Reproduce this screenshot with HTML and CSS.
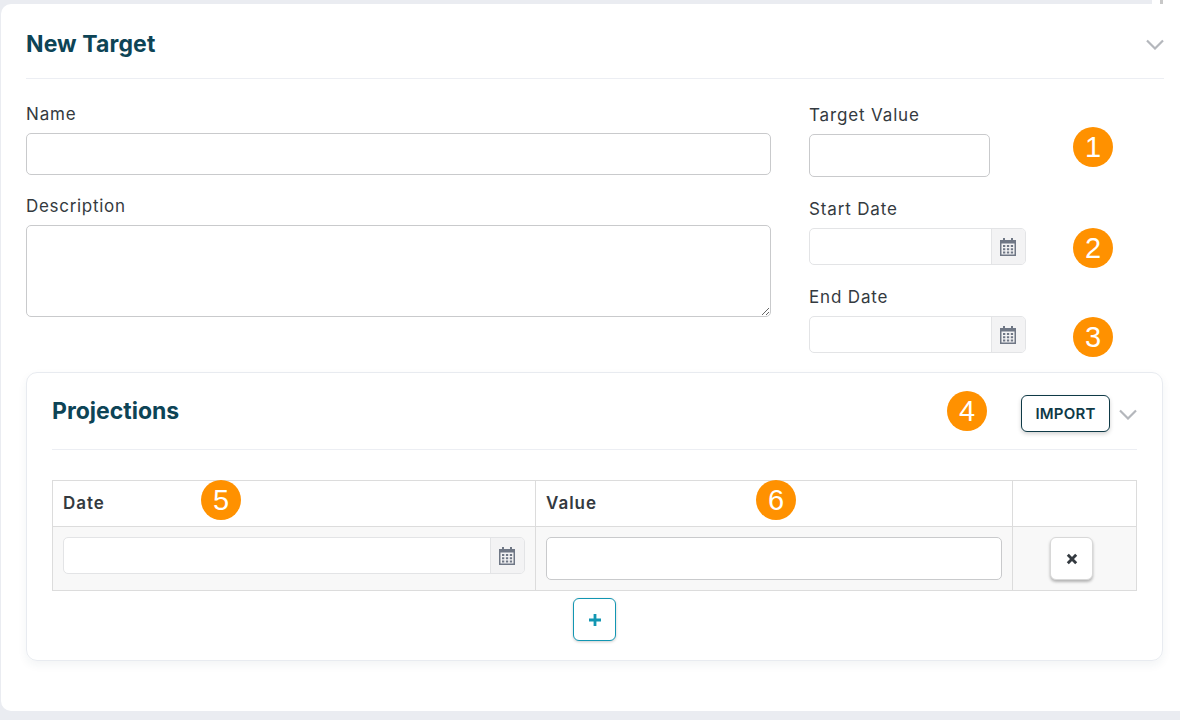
FILE: index.html
```html
<!DOCTYPE html>
<html lang="en">
<head>
<meta charset="utf-8">
<title>New Target</title>
<link rel="stylesheet" href="styles.css">
</head>
<body>
<span class="scroll-tick"></span>
<main class="card">
  <header class="card-head">
    <h1 class="title">New Target</h1>
    <svg class="chev" viewBox="0 0 18 11"><path d="M1 1.5l8 8 8-8"/></svg>
  </header>
  <section class="form">
    <div class="col-left">
      <label class="label">Name</label>
      <input class="input input-name" type="text">
      <label class="label label-desc">Description</label>
      <textarea class="input textarea"></textarea>
    </div>
    <div class="col-right">
      <div class="field-row row-value">
        <div class="field">
          <label class="label">Target Value</label>
          <input class="input input-value" type="text">
        </div>
        <span class="badge badge-a">1</span>
      </div>
      <div class="field-row row-start">
        <div class="field">
          <label class="label">Start Date</label>
          <div class="date date-short">
            <span class="date-input"></span>
            <span class="date-btn"><svg class="cal" viewBox="0 0 16 18"><use href="#cal"/></svg></span>
          </div>
        </div>
        <span class="badge badge-b">2</span>
      </div>
      <div class="field-row row-end">
        <div class="field">
          <label class="label">End Date</label>
          <div class="date date-short">
            <span class="date-input"></span>
            <span class="date-btn"><svg class="cal" viewBox="0 0 16 18"><use href="#cal"/></svg></span>
          </div>
        </div>
        <span class="badge badge-c">3</span>
      </div>
    </div>
  </section>
  <section class="panel">
    <header class="panel-head">
      <h2 class="panel-title">Projections</h2>
      <span class="badge badge-4">4</span>
      <button class="btn-import" type="button">IMPORT</button>
      <svg class="chev chev-panel" viewBox="0 0 18 11"><path d="M1 1.5l8 8 8-8"/></svg>
    </header>
    <table class="grid">
      <thead>
        <tr>
          <th class="c-date"><span>Date</span><span class="badge badge-5">5</span></th>
          <th class="c-value"><span>Value</span><span class="badge badge-6">6</span></th>
          <th class="c-act"></th>
        </tr>
      </thead>
      <tbody>
        <tr>
          <td>
            <div class="date">
              <span class="date-input"></span>
              <span class="date-btn"><svg class="cal" viewBox="0 0 16 18"><use href="#cal"/></svg></span>
            </div>
          </td>
          <td><input class="input input-cell" type="text"></td>
          <td class="act-cell">
            <button class="btn-x" type="button">
              <svg viewBox="0 0 10 10"><path d="M1.500 1.500l7 7M8.500 1.500l-7 7"/></svg>
            </button>
          </td>
        </tr>
      </tbody>
    </table>
    <div class="add-row">
      <button class="btn-add" type="button">
        <svg viewBox="0 0 14 14"><path d="M7 1v12M1 7h12"/></svg>
      </button>
    </div>
  </section>
</main>
<svg class="defs" width="0" height="0">
  <defs>
    <g id="cal">
      <path fill="#6f7785" fill-rule="evenodd" d="M3 0h2v2h6V0h2v2h3v16H0V2h3zM1.500 5.500v11h13v-11z"/>
      <path fill="#6f7785" d="M3 7h2.300v2H3zM6.900 7h2.300v2H6.900zM10.800 7h2.300v2h-2.300zM3 10.200h2.300v2H3zM6.900 10.200h2.300v2H6.900zM10.800 10.200h2.300v2h-2.300zM3 13.400h2.300v2H3zM6.900 13.400h2.300v2H6.900zM10.800 13.400h2.300v2h-2.300z"/>
    </g>
  </defs>
</svg>
</body>
</html>
```
FILE: styles.css
```css
* { box-sizing: border-box; }
html, body { height: 100%; }
body {
  margin: 0;
  height: 720px;
  overflow: hidden;
  background: #eaecf1;
  font-family: "Inter", "Liberation Sans", sans-serif;
  color: #343a40;
  padding: 4px 0 9px 1px;
  position: relative;
}
.defs { position: absolute; }
.scroll-tick {
  position: absolute;
  top: 0;
  left: 1152px;
  width: 28px;
  height: 4px;
  background: linear-gradient(to right, #fff 8px, #c8c8c8 8px, #c8c8c8 11px, #fff 11px);
}
.card {
  height: 707px;
  background: #fff;
  border-radius: 10px 0 0 10px;
  padding: 0 16px 0 25px;
}
.card-head {
  height: 75px;
  padding-top: 6px;
  border-bottom: 1px solid #eceef3;
  display: flex;
  align-items: center;
  justify-content: space-between;
}
.title {
  margin: 0;
  font-size: 23px;
  line-height: 28px;
  font-weight: 700;
  color: #0d4456;
  letter-spacing: 0.1px;
}
.chev { width: 18px; height: 11px; fill: none; stroke: #b4b7bc; stroke-width: 2.2; }
.form { display: flex; height: 293px; }
.col-left { width: 745px; padding-top: 24px; display: flex; flex-direction: column; }
.col-right { margin-left: 38px; flex: 1; }
.label { display: block; font-size: 17px; line-height: 22px; color: #343a40; letter-spacing: 0.85px; }
.label-desc { letter-spacing: 0.7px; }
.input {
  display: block;
  background: #fff;
  border: 1px solid #c9cacc;
  border-radius: 5px;
  outline: none;
}
.input-name { width: 745px; height: 42px; margin-top: 8px; }
.label-desc { margin-top: 20px; }
.textarea { width: 745px; height: 92px; margin-top: 8px; }
.field-row { display: flex; align-items: flex-start; }
.row-value { padding-top: 25px; }
.row-start { padding-top: 21px; }
.row-end { padding-top: 21px; }
.input-value { width: 181px; height: 43px; margin-top: 8px; }
.field { width: 264px; }
.date {
  display: flex;
  height: 37px;
  border: 1px solid #e3e4e6;
  border-radius: 5px;
  overflow: hidden;
  background: #fff;
}
.date-short { width: 217px; margin-top: 8px; }
.date-input { flex: 1; }
.date-btn {
  width: 34px;
  padding-right: 2px;
  background: #f3f3f4;
  border-left: 1px solid #e3e4e6;
  display: flex;
  align-items: center;
  justify-content: center;
}
.cal { width: 16px; height: 18px; }
.badge {
  width: 40px;
  height: 40px;
  border-radius: 50%;
  background: #ff9100;
  color: #fff;
  font-family: "Liberation Sans", sans-serif;
  font-size: 29px;
  font-weight: 400;
  line-height: 40px;
  text-align: center;
  letter-spacing: 0;
  flex: none;
}
.badge-a { margin-top: 23px; margin-bottom: -10px; }
.badge-b { margin-top: 30px; margin-bottom: -10px; }
.badge-c { margin-top: 31px; margin-bottom: -10px; }
.panel {
  width: 1137px;
  height: 289px;
  border: 1px solid #e8ebf0;
  border-radius: 11px;
  box-shadow: 0 4px 10px rgba(40, 60, 90, 0.06);
  padding: 0 25px;
}
.panel-head {
  height: 77px;
  border-bottom: 1px solid #eceef3;
  display: flex;
  align-items: center;
}
.panel-title {
  margin: 0;
  font-size: 23px;
  line-height: 28px;
  font-weight: 700;
  color: #0d4456;
  letter-spacing: 0;
  flex: 1;
}
.badge-4 { margin-right: 34px; }
.btn-import {
  width: 89px;
  height: 37px;
  margin-top: 4px;
  background: #fff;
  border: 1px solid #0f3a47;
  border-radius: 6px;
  color: #0f3a47;
  font: 600 15px "Inter", "Liberation Sans", sans-serif;
  letter-spacing: 0.2px;
  box-shadow: 0 2px 4px rgba(0, 0, 0, 0.18);
  padding: 0;
}
.chev-panel { margin-left: 9px; margin-top: 6px; }
.grid {
  width: 1085px;
  margin-top: 30px;
  border-collapse: collapse;
  table-layout: fixed;
}
.grid th, .grid td { border: 1px solid #dcdcdc; padding: 0; }
.grid th {
  height: 46px;
  text-align: left;
  font-size: 17px;
  font-weight: 600;
  letter-spacing: 1px;
  color: #343a40;
  padding: 0 0 2px 10px;
}
.grid th > span:first-child { display: inline-block; }
.c-date { width: 483px; position: relative; }
.c-value { width: 477px; position: relative; }
.c-act { width: 124px; }
.badge-5, .badge-6 { position: absolute; top: -1px; }
.badge-5 { left: 148px; }
.badge-6 { left: 220px; }
.grid td { height: 64px; background: #f8f8f8; padding: 10px 10px 0; vertical-align: top; }
.grid td .date { width: 462px; }
.input-cell { width: 456px; height: 43px; }
.grid td.act-cell { padding: 10px 0 0 37px; }
.btn-x {
  width: 43px;
  height: 43px;
  background: #fff;
  border: 1px solid #d8d8d8;
  border-radius: 6px;
  box-shadow: 0 2px 3px rgba(0, 0, 0, 0.28);
  padding: 0;
  display: flex;
  align-items: center;
  justify-content: center;
}
.btn-x svg { width: 12px; height: 12px; fill: none; stroke: #343a40; stroke-width: 2.4; }
.add-row { display: flex; justify-content: center; margin-top: 7px; }
.btn-add {
  width: 43px;
  height: 43px;
  background: #fff;
  border: 1px solid #1296b2;
  border-radius: 6px;
  box-shadow: 0 1px 3px rgba(0, 0, 0, 0.2);
  padding: 0;
  display: flex;
  align-items: center;
  justify-content: center;
}
.btn-add svg { width: 14px; height: 14px; fill: none; stroke: #1296b2; stroke-width: 2.8; }
```
